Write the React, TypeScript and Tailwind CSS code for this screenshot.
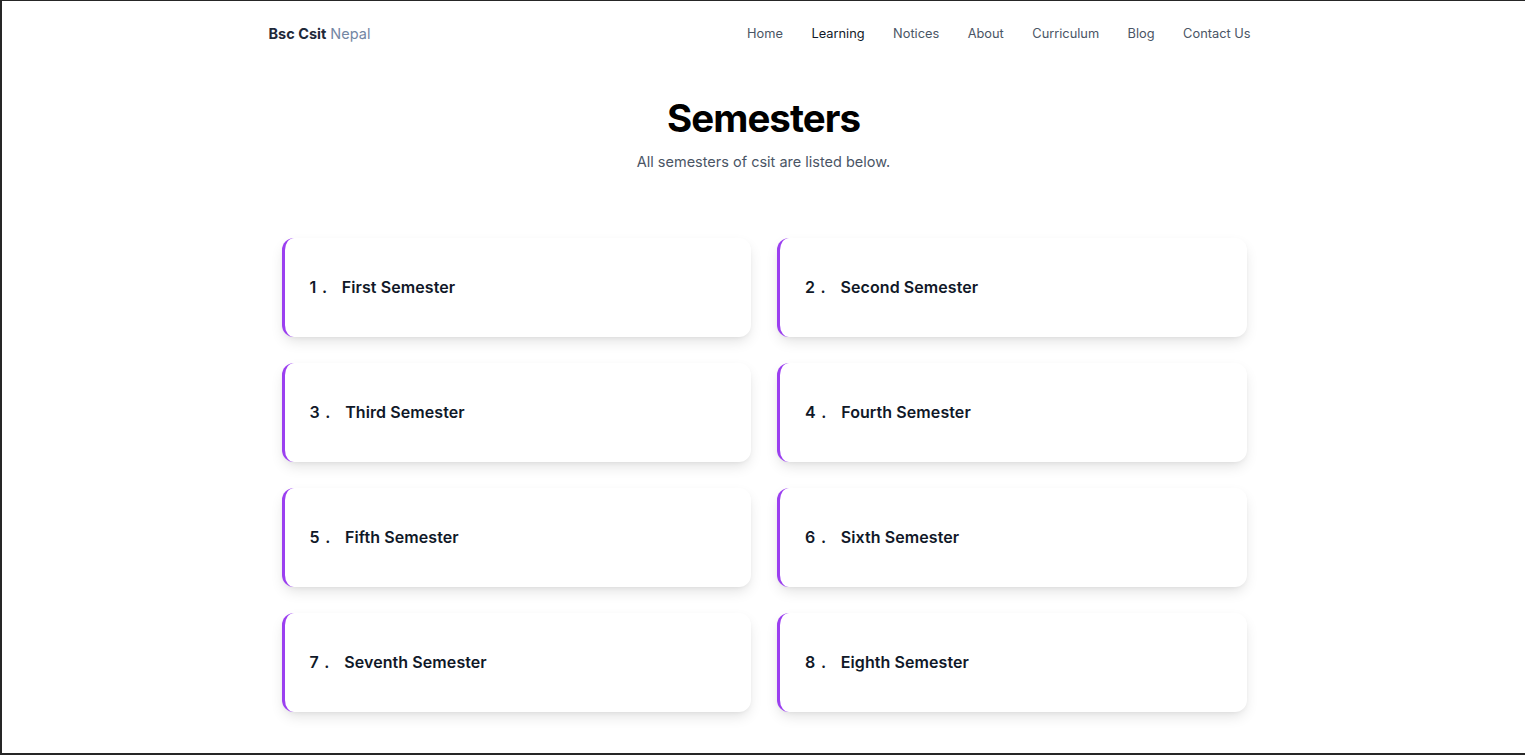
const links = ["Home", "Learning", "Notices", "About", "Curriculum", "Blog", "Contact Us"]

const semesters = [
  "First Semester",
  "Second Semester",
  "Third Semester",
  "Fourth Semester",
  "Fifth Semester",
  "Sixth Semester",
  "Seventh Semester",
  "Eighth Semester",
]

function SemesterCard({ n, title }: { n: number; title: string }) {
  return (
    <a
      href="#"
      className="flex h-[99px] items-center rounded-xl border-l-[3px] border-[#9b3ff0] bg-white pl-[25px] shadow-[0_6px_14px_-2px_rgba(0,0,0,0.12),0_2px_5px_-2px_rgba(0,0,0,0.08)]"
    >
      <span className="mr-[14px] text-[16px] font-semibold tracking-[0.05em] text-gray-900">{n} .</span>
      <span className="text-[16px] font-semibold tracking-[0.005em] text-gray-900">{title}</span>
    </a>
  )
}

export default function App() {
  return (
    <div className="h-[755px] overflow-hidden border-t border-l-2 border-b-2 border-[#262626] bg-white font-['Inter',sans-serif]">
      {/* Navbar */}
      <header className="mx-auto flex w-[992px] items-center justify-between pt-[22px] pl-[1px]">
        <a href="#" className="text-[14.5px] text-gray-800">
          <span className="font-bold">Bsc Csit</span>{" "}
          <span className="text-[#7386a3]">Nepal</span>
        </a>
        <nav className="flex items-center gap-[28.5px] pr-[9px]">
          {links.map((l) => (
            <a
              key={l}
              href="#"
              className={`text-[12.8px] ${l === "Learning" ? "text-gray-900" : "text-gray-600"}`}
            >
              {l}
            </a>
          ))}
        </nav>
      </header>

      {/* Encabezado */}
      <section className="mt-[50px] text-center">
        <h1 className="text-[38.5px] leading-[46px] font-bold tracking-tight text-black">Semesters</h1>
        <p className="mt-[10px] text-[14.5px] text-gray-600">All semesters of csit are listed below.</p>
      </section>

      {/* Lista */}
      <div className="mx-auto mt-[65px] grid w-[966px] grid-cols-2 gap-x-[26px] gap-y-[26px] pl-[1px]">
        {semesters.map((s, i) => (
          <SemesterCard key={s} n={i + 1} title={s} />
        ))}
      </div>
    </div>
  )
}
